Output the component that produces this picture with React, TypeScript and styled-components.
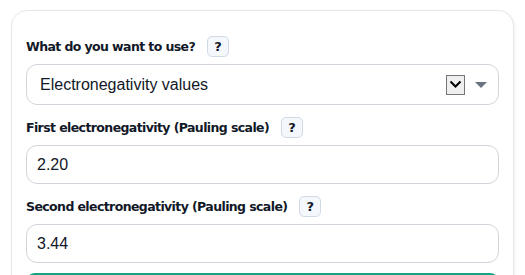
import React from "react";
import styled, { createGlobalStyle } from "styled-components";

const Global = createGlobalStyle`
  html, body { margin: 0; padding: 0; background: #ffffff; }
  body { font-family: "Liberation Sans", Arial, sans-serif; }
  * { box-sizing: border-box; }
`;

const Page = styled.div`
  padding: 10px 11px 0 11px;
  height: 275px;
  overflow: hidden;
`;

const Card = styled.div`
  border: 1px solid #e5e7eb;
  border-radius: 16px;
  box-shadow: 1px 1px 3px rgba(0, 0, 0, 0.06);
  padding: 25px 14px 20px 14px;
  display: flex;
  flex-direction: column;
  background: #fff;
`;

const Field = styled.div`
  display: flex;
  flex-direction: column;
  gap: 7px;
  margin-bottom: 12px;
`;

const LabelRow = styled.div`
  display: flex;
  align-items: center;
  gap: 12px;
  height: 21px;
`;

const Label = styled.label`
  font-family: "DejaVu Sans", Verdana, sans-serif;
  font-weight: 700;
  font-size: 12.5px;
  letter-spacing: -0.6px;
  color: #111827;
`;

const Help = styled.button`
  width: 22px;
  height: 21px;
  padding: 0;
  border: 1px solid #d1d9e4;
  border-radius: 5px;
  background: #f4f7fb;
  font-family: "DejaVu Sans", Verdana, sans-serif;
  font-weight: 700;
  font-size: 13px;
  color: #111827;
  display: flex;
  align-items: center;
  justify-content: center;
`;

const Box = styled.div<{ $h: number; $pl: number }>`
  height: ${(p) => p.$h}px;
  border: 1px solid #d1d5db;
  border-radius: 11px;
  display: flex;
  align-items: center;
  padding-left: ${(p) => p.$pl}px;
  padding-right: 11px;
  font-family: "Liberation Sans", Arial, sans-serif;
  font-size: 16px;
  color: #111827;
`;

const Value = styled.span`
  flex: 1;
`;

const NativeArrow = styled.span`
  width: 19px;
  height: 20px;
  border: 1px solid #767676;
  background: #efefef;
  display: flex;
  align-items: center;
  justify-content: center;
  margin-right: 10px;
`;

const Caret = styled.span`
  width: 0;
  height: 0;
  border-left: 6px solid transparent;
  border-right: 6px solid transparent;
  border-top: 6px solid #6b7280;
`;

const Submit = styled.div`
  height: 40px;
  border-radius: 9px;
  background: #14a384;
  margin-top: -2px;
`;

export default function App() {
  return (
    <>
      <Global />
      <Page>
        <Card>
          <Field>
            <LabelRow>
              <Label>What do you want to use?</Label>
              <Help>?</Help>
            </LabelRow>
            <Box $h={41} $pl={13}>
              <Value>Electronegativity values</Value>
              <NativeArrow>
                <svg width="13" height="9" viewBox="0 0 13 9">
                  <path d="M1.5 1.5 L6.5 6.5 L11.5 1.5" fill="none" stroke="#000" strokeWidth="2" />
                </svg>
              </NativeArrow>
              <Caret />
            </Box>
          </Field>
          <Field>
            <LabelRow>
              <Label>First electronegativity (Pauling scale)</Label>
              <Help>?</Help>
            </LabelRow>
            <Box $h={39} $pl={10}>
              <Value>2.20</Value>
            </Box>
          </Field>
          <Field>
            <LabelRow>
              <Label>Second electronegativity (Pauling scale)</Label>
              <Help>?</Help>
            </LabelRow>
            <Box $h={39} $pl={10}>
              <Value>3.44</Value>
            </Box>
          </Field>
          <Submit />
        </Card>
      </Page>
    </>
  );
}
